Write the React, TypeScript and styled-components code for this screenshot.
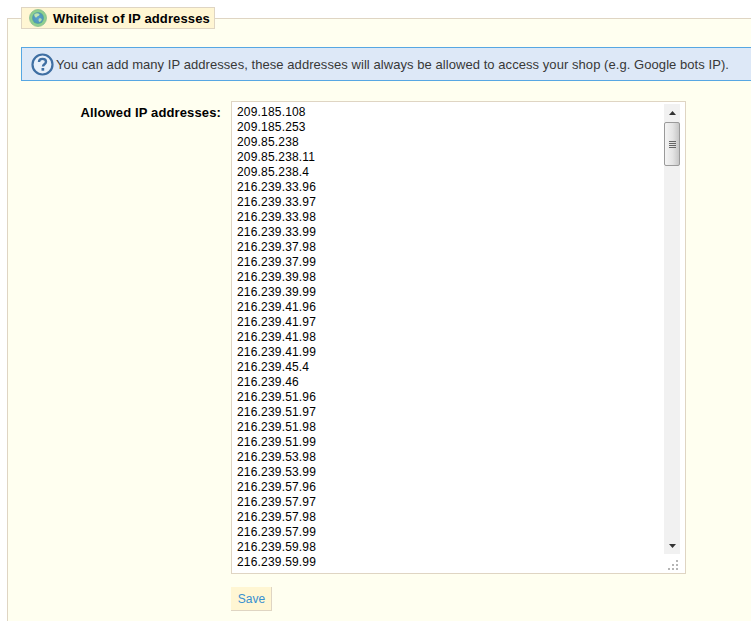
import React from "react";
import styled, { createGlobalStyle } from "styled-components";

const GlobalStyle = createGlobalStyle`
  html, body {
    margin: 0;
    padding: 0;
    background: #fff;
    overflow: hidden;
  }
  body {
    font-family: "Liberation Sans", Arial, sans-serif;
    font-size: 12px;
    color: #000;
  }
`;

const Page = styled.div`
  width: 751px;
  height: 621px;
  overflow: hidden;
  padding: 7px 0 0 7px;
  box-sizing: border-box;
`;

const Fieldset = styled.fieldset`
  width: 800px;
  height: 640px;
  box-sizing: border-box;
  margin: 0;
  padding: 0 0 0 13px;
  border: 1px solid #dfd5c3;
  background: #fffff0;
`;

const Legend = styled.legend`
  display: flex;
  align-items: center;
  gap: 6px;
  width: 194px;
  height: 22px;
  box-sizing: border-box;
  padding: 0 0 0 7px;
  margin: 0;
  background: #fff6d3;
  border: 1px solid #dfd5c3;
  font-size: 13px;
  font-weight: bold;
  letter-spacing: 0.13px;
  color: #000;
`;

const Hint = styled.div`
  display: flex;
  align-items: center;
  gap: 2px;
  width: 760px;
  height: 34px;
  box-sizing: border-box;
  margin-top: 18px;
  padding-left: 9px;
  background: #dde8f7;
  border: 1px solid #57a7e3;
  font-size: 13px;
  letter-spacing: 0.06px;
  color: #383838;
  white-space: nowrap;
`;

const Row = styled.div`
  display: flex;
  align-items: flex-start;
  margin-top: 20px;
`;

const Label = styled.label`
  width: 200px;
  flex: none;
  padding-top: 4px;
  text-align: right;
  font-size: 13px;
  font-weight: bold;
  letter-spacing: 0.13px;
  line-height: 15px;
`;

const Field = styled.div`
  margin-left: 10px;
`;

const ListBox = styled.div`
  display: flex;
  width: 455px;
  height: 473px;
  box-sizing: border-box;
  background: #fff;
  border: 1px solid #dfd5c3;
  padding: 2px 5px 0 5px;
`;

const AddressList = styled.div`
  flex: 1;
  padding-top: 1px;
  line-height: 15px;
  font-size: 12px;
  letter-spacing: 0.18px;
`;

const ScrollColumn = styled.div`
  width: 16px;
  flex: none;
  display: flex;
  flex-direction: column;
`;

const ScrollTrack = styled.div`
  height: 450px;
  display: flex;
  flex-direction: column;
  background: #f1f1f1;
`;

const ScrollButton = styled.div`
  height: 17px;
  flex: none;
  display: flex;
  align-items: center;
  justify-content: center;
  background: #f1f1f1;
`;

const ScrollThumb = styled.div`
  height: 44px;
  flex: none;
  margin: 1px 0 0;
  box-sizing: border-box;
  border: 1px solid #9a9a9a;
  border-radius: 2px;
  background: linear-gradient(to right, #f4f4f4, #e4e4e4 55%, #c6c6c6);
  display: flex;
  align-items: center;
  justify-content: center;
`;

const ScrollSpacer = styled.div`
  flex: 1;
`;

const Grip = styled.div`
  flex: 1;
  display: flex;
  justify-content: flex-end;
  align-items: flex-end;
  padding: 0 2px 3px 0;
`;

const SaveButton = styled.button`
  display: block;
  width: 41px;
  height: 24px;
  margin-top: 13px;
  padding: 0 0 0 1px;
  background: #fff6d3;
  border: 0;
  border-right: 1px solid #dfd5c3;
  border-bottom: 1px solid #dfd5c3;
  color: #3990cf;
  font-family: inherit;
  font-size: 12px;
`;

const addresses = [
  "209.185.108",
  "209.185.253",
  "209.85.238",
  "209.85.238.11",
  "209.85.238.4",
  "216.239.33.96",
  "216.239.33.97",
  "216.239.33.98",
  "216.239.33.99",
  "216.239.37.98",
  "216.239.37.99",
  "216.239.39.98",
  "216.239.39.99",
  "216.239.41.96",
  "216.239.41.97",
  "216.239.41.98",
  "216.239.41.99",
  "216.239.45.4",
  "216.239.46",
  "216.239.51.96",
  "216.239.51.97",
  "216.239.51.98",
  "216.239.51.99",
  "216.239.53.98",
  "216.239.53.99",
  "216.239.57.96",
  "216.239.57.97",
  "216.239.57.98",
  "216.239.57.99",
  "216.239.59.98",
  "216.239.59.99",
];

function GlobeIcon() {
  return (
    <svg width="18" height="18" viewBox="0 0 18 18">
      <defs>
        <radialGradient id="sea" cx="50%" cy="50%" r="55%">
          <stop offset="0%" stopColor="#5a9fd0" />
          <stop offset="75%" stopColor="#4f97b8" />
          <stop offset="100%" stopColor="#6cbb78" />
        </radialGradient>
      </defs>
      <circle cx="9" cy="9" r="8.500" fill="#8fd08f" stroke="#86bd90" strokeWidth="0.800" />
      <circle cx="9" cy="9" r="6" fill="url(#sea)" />
      <path d="M5.500 5c2-1.200 4-.8 5 .2.400 1-1 1.600-2 2-.5 1.200-1.500 1.500-2.200 1-.8-.7-1.400-2-.8-3.200z" fill="#bfe3b0" />
      <path d="M10 9.500c1.200-.4 2.500 0 2.800 1-.3 1.300-1.500 2.300-2.500 2.400-.8-.8-1-2.400-.3-3.400z" fill="#b0dcaa" />
    </svg>
  );
}

function HelpIcon() {
  return (
    <svg width="23" height="23" viewBox="0 0 23 23">
      <circle cx="11.500" cy="11.500" r="10" fill="#e8f0fa" stroke="#3f6fa3" strokeWidth="2.200" />
      <path
        d="M8 9c0-2 1.500-3.100 3.500-3.100S15 7 15 8.800c0 2.400-3 2.500-3 4.700"
        fill="none"
        stroke="#3f6fa3"
        strokeWidth="2.400"
      />
      <rect x="10.500" y="15" width="2.700" height="2.700" fill="#3f6fa3" />
    </svg>
  );
}

function ArrowUp() {
  return (
    <svg width="7" height="4" viewBox="0 0 7 4">
      <path d="M3.500 0L7 4H0z" fill="#333" />
    </svg>
  );
}

function ArrowDown() {
  return (
    <svg width="7" height="4" viewBox="0 0 7 4">
      <path d="M0 0h7L3.500 4z" fill="#333" />
    </svg>
  );
}

function ThumbLines() {
  return (
    <svg width="7" height="7" viewBox="0 0 7 7">
      <path d="M0 .5h7M0 2.500h7M0 4.500h7M0 6.500h7" stroke="#666" strokeWidth="1" />
    </svg>
  );
}

function GripDots() {
  return (
    <svg width="10" height="10" viewBox="0 0 10 10">
      <g fill="#b5b5b5">
        <rect x="8" y="0" width="2" height="2" />
        <rect x="4" y="4" width="2" height="2" />
        <rect x="8" y="4" width="2" height="2" />
        <rect x="0" y="8" width="2" height="2" />
        <rect x="4" y="8" width="2" height="2" />
        <rect x="8" y="8" width="2" height="2" />
      </g>
    </svg>
  );
}

export default function App() {
  return (
    <Page>
      <GlobalStyle />
      <Fieldset>
        <Legend>
          <GlobeIcon />
          Whitelist of IP addresses
        </Legend>
        <Hint>
          <HelpIcon />
          You can add many IP addresses, these addresses will always be allowed to access your shop (e.g. Google bots IP).
        </Hint>
        <Row>
          <Label>Allowed IP addresses:</Label>
          <Field>
            <ListBox>
              <AddressList>
                {addresses.map((address) => (
                  <div key={address}>{address}</div>
                ))}
              </AddressList>
              <ScrollColumn>
                <ScrollTrack>
                  <ScrollButton>
                    <ArrowUp />
                  </ScrollButton>
                  <ScrollThumb>
                    <ThumbLines />
                  </ScrollThumb>
                  <ScrollSpacer />
                  <ScrollButton>
                    <ArrowDown />
                  </ScrollButton>
                </ScrollTrack>
                <Grip>
                  <GripDots />
                </Grip>
              </ScrollColumn>
            </ListBox>
            <SaveButton>Save</SaveButton>
          </Field>
        </Row>
      </Fieldset>
    </Page>
  );
}
